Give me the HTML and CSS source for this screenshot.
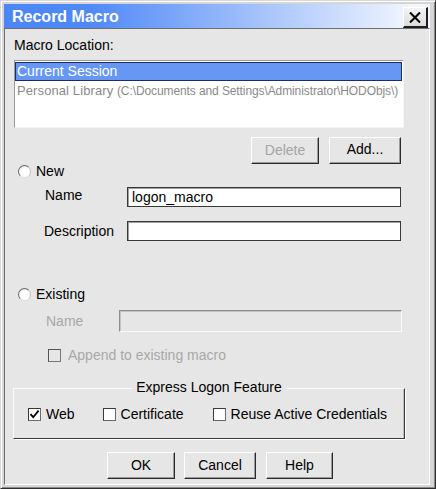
FILE: index.html
```html
<!DOCTYPE html>
<html>
<head>
<meta charset="utf-8">
<title>Record Macro</title>
<link rel="stylesheet" href="styles.css">
</head>
<body>
<div class="window">
  <div class="titlebar">
    <span class="title">Record Macro</span>
    <div class="close-btn">
      <svg width="12" height="11" viewBox="0 0 12 11"><path d="M1 0.5 L11 10.5 M11 0.5 L1 10.5" stroke="#000" stroke-width="2.1" fill="none"/></svg>
    </div>
  </div>
  <div class="client">
    <div class="loc-label">Macro Location:</div>
    <div class="listbox">
      <div class="list-item selected">Current Session</div>
      <div class="list-item dim">Personal Library <span class="path">(C:\Documents and Settings\Administrator\HODObjs\)</span></div>
    </div>
    <div class="btn-row">
      <div class="btn btn-delete disabled">Delete</div>
      <div class="btn btn-add">Add...</div>
    </div>
    <div class="radio-row row-new">
      <span class="radio"></span><span>New</span>
    </div>
    <div class="field-row row-name">
      <span class="field-label">Name</span>
      <div class="input">logon_macro</div>
    </div>
    <div class="field-row row-desc">
      <span class="field-label">Description</span>
      <div class="input"></div>
    </div>
    <div class="radio-row row-existing">
      <span class="radio"></span><span>Existing</span>
    </div>
    <div class="field-row row-exname">
      <span class="field-label disabled-text">Name</span>
      <div class="input input-disabled"></div>
    </div>
    <div class="check-row row-append">
      <span class="checkbox checkbox-disabled"></span><span class="disabled-text">Append to existing macro</span>
    </div>
    <div class="group">
      <div class="group-title">Express Logon Feature</div>
      <div class="group-items">
        <div class="check-item item-web">
          <span class="checkbox"><svg width="11" height="11" viewBox="0 0 11 11"><path d="M1.5 5.2 L4.2 8.2 L9.6 1.6" stroke="#000" stroke-width="1.8" fill="none"/></svg></span><span>Web</span>
        </div>
        <div class="check-item item-cert">
          <span class="checkbox"></span><span>Certificate</span>
        </div>
        <div class="check-item item-reuse">
          <span class="checkbox"></span><span>Reuse Active Credentials</span>
        </div>
      </div>
    </div>
    <div class="footer">
      <div class="btn btn-ok">OK</div>
      <div class="btn btn-cancel">Cancel</div>
      <div class="btn btn-help">Help</div>
    </div>
  </div>
</div>
</body>
</html>
```
FILE: styles.css
```css
html, body {
  margin: 0;
  padding: 0;
  background: #d4d4d4;
}
body {
  font-family: "Liberation Sans", Arial, sans-serif;
  font-size: 14px;
  color: #000;
}
.window {
  width: 436px;
  height: 489px;
  box-sizing: border-box;
  border: 1px solid;
  border-color: #d8d8d8 #303030 #303030 #d8d8d8;
  box-shadow: inset 1px 1px #ffffff, inset -1px -1px #8a8a8a;
  background: #d6d6d6;
  padding: 3px 5px 3px 3px;
  display: flex;
  flex-direction: column;
}
.titlebar {
  height: 24px;
  flex: none;
  display: flex;
  align-items: flex-start;
  background: linear-gradient(to right, #4b86f7 0%, #4f89f7 20%, #f2f6ff 96%);
}
.title {
  color: #fff;
  font-weight: bold;
  font-size: 16px;
  line-height: 25px;
  padding-left: 8px;
}
.close-btn {
  margin: 3px 2px 0 auto;
  width: 25px;
  height: 21px;
  box-sizing: border-box;
  background: linear-gradient(#f4f4f4, #dcdcdc);
  border-top: 1px solid #fff;
  border-left: 1px solid #fff;
  border-right: 2px solid #1e1e1e;
  border-bottom: 2px solid #1e1e1e;
  display: flex;
  align-items: center;
  justify-content: center;
}
.client {
  flex: 1;
  background: #e6e6e6;
  border: 1px solid;
  border-color: #6e6e6e #ffffff #ffffff #6e6e6e;
  padding: 8px 0 0 9px;
  display: flex;
  flex-direction: column;
  align-items: flex-start;
}
.loc-label {
  line-height: 16px;
  height: 16px;
}
.listbox {
  margin-top: 7px;
  width: 390px;
  height: 68px;
  box-sizing: border-box;
  background: #fff;
  border: 1px solid;
  border-color: #9a9a9a #f4f4f4 #f4f4f4 #9a9a9a;
  padding: 1px 1px 0 0;
}
.list-item {
  height: 19px;
  line-height: 17px;
  padding-left: 1px;
  box-sizing: border-box;
  white-space: nowrap;
}
.list-item.selected {
  background: #6797f5;
  color: #fff;
  border: 1px solid #1d2d63;
}
.list-item.dim {
  color: #8a8a8a;
  padding-left: 2px;
  line-height: 20px;
  font-size: 13px;
  letter-spacing: 0.1px;
}
.path {
  font-size: 12px;
  letter-spacing: -0.1px;
}
.btn-row {
  margin-top: 9px;
  width: 387px;
  display: flex;
  justify-content: flex-end;
  gap: 10px;
}
.btn {
  height: 27px;
  box-sizing: border-box;
  background: #e6e6e6;
  border: 1px solid;
  border-color: #ffffff #2a2a2a #2a2a2a #ffffff;
  box-shadow: inset -1px -1px #9c9c9c;
  display: flex;
  align-items: center;
  justify-content: center;
  line-height: 16px;
  padding-bottom: 2px;
}
.btn-delete { width: 68px; }
.btn-add { width: 72px; padding-bottom: 4px; }
.btn.disabled { color: #a4a4a4; }
.radio-row {
  height: 16px;
  line-height: 16px;
  display: flex;
  align-items: center;
  gap: 5px;
  padding-left: 4px;
}
.row-new { margin-top: -1px; }
.row-existing { margin-top: 45px; }
.radio {
  width: 13px;
  height: 13px;
  box-sizing: border-box;
  border-radius: 50%;
  border: 1px solid;
  border-color: #6a6a6a #c4c4c4 #dedede #6a6a6a;
  background: radial-gradient(circle at 60% 60%, #ffffff 40%, #e4e4e4 100%);
}
.field-row {
  display: flex;
  align-items: center;
}
.field-label {
  line-height: 16px;
}
.row-name, .row-desc {
  height: 20px;
  padding-left: 30px;
}
.row-name { margin-top: 8px; }
.row-desc { margin-top: 14px; }
.row-name .field-label, .row-desc .field-label {
  width: 83px;
  margin-top: -1px;
}
.row-name .field-label { padding-left: 1px; width: 82px; margin-top: -5px; }
.input {
  width: 274px;
  height: 20px;
  box-sizing: border-box;
  background: #fff;
  border: 1px solid #383838;
  box-shadow: inset 1px 1px #a0a0a0;
  padding-left: 4px;
  line-height: 18px;
}
.row-exname {
  margin-top: 8px;
  height: 22px;
  padding-left: 32px;
}
.row-exname .field-label { width: 73px; }
.input-disabled {
  width: 283px;
  height: 22px;
  background: #e6e6e6;
  border-color: #8c8c8c #fafafa #fafafa #8c8c8c;
  box-shadow: inset 1px 1px #c4c4c4;
}
.disabled-text { color: #a8a8a8; }
.check-row {
  margin-top: 15px;
  height: 16px;
  line-height: 16px;
  display: flex;
  align-items: center;
  gap: 7px;
  padding-left: 34px;
}
.checkbox {
  width: 13px;
  height: 13px;
  box-sizing: border-box;
  background: #fff;
  border: 1px solid;
  border-color: #3a3a3a #6a6a6a #6a6a6a #3a3a3a;
  display: flex;
  align-items: center;
  justify-content: center;
}
.checkbox-disabled {
  background: #e6e6e6;
  border-color: #555 #777 #777 #555;
}
.group {
  margin-top: 25px;
  margin-left: -1px;
  width: 392px;
  height: 51px;
  box-sizing: border-box;
  border: 1px solid;
  border-color: #fbfbfb #3a3a3a #3a3a3a #fbfbfb;
  box-shadow: 1px 1px #ffffff, inset -1px 0 #bdbdbd;
  display: flex;
  flex-direction: column;
}
.group-title {
  margin: -10px auto 0;
  padding: 0 4px;
  background: #e6e6e6;
  line-height: 16px;
  height: 16px;
}
.group-items {
  margin-top: 11px;
  padding-left: 14px;
  display: flex;
  height: 16px;
  line-height: 16px;
}
.check-item {
  display: flex;
  align-items: center;
  gap: 5px;
}
.item-cert { margin-left: 28px; }
.item-reuse { margin-left: 29px; }
.footer {
  margin-top: 13px;
  padding-left: 93px;
  display: flex;
  gap: 9px;
}
.btn-ok { width: 68px; }
.btn-cancel { width: 72px; }
.btn-help { width: 67px; margin-left: 1px; }
```
